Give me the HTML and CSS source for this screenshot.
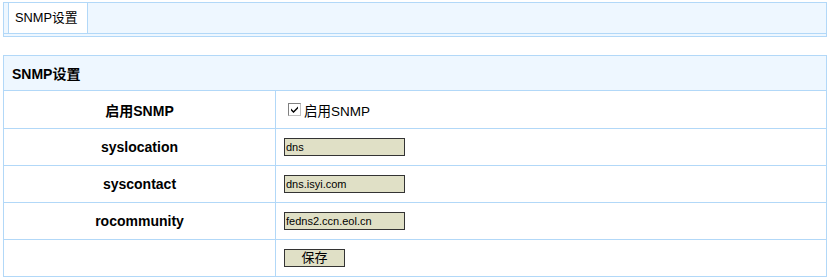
FILE: index.html
```html
<!DOCTYPE html>
<html>
<head>
<meta charset="utf-8">
<link rel="stylesheet" href="styles.css">
</head>
<body>
<div class="topbar">
  <div class="tabs">
    <div class="tab-gap"></div>
    <div class="tab">SNMP设置</div>
    <div class="tab-rest"></div>
  </div>
</div>
<table class="form">
  <tr class="head"><th colspan="2">SNMP设置</th></tr>
  <tr class="r1">
    <td class="label">启用SNMP</td>
    <td class="field"><label class="chk"><span class="box"><svg width="9" height="9" viewBox="0 0 9 9"><path d="M1 3.5 L3.5 6 L8 1.5 L8 3.5 L3.5 8 L1 5.5 Z" fill="#000"/></svg></span>启用SNMP</label></td>
  </tr>
  <tr>
    <td class="label">syslocation</td>
    <td class="field"><input class="txt" type="text" value="dns"></td>
  </tr>
  <tr>
    <td class="label">syscontact</td>
    <td class="field"><input class="txt" type="text" value="dns.isyi.com"></td>
  </tr>
  <tr>
    <td class="label">rocommunity</td>
    <td class="field"><input class="txt" type="text" value="fedns2.ccn.eol.cn"></td>
  </tr>
  <tr>
    <td class="label"></td>
    <td class="field"><button class="btn" type="button">保存</button></td>
  </tr>
</table>
</body>
</html>
```
FILE: styles.css
```css
html, body {
  margin: 0;
  padding: 0;
  background: #fff;
  font-family: "Liberation Sans", Arial, "Noto Sans CJK SC", sans-serif;
  font-size: 13px;
  color: #000;
}
.topbar {
  margin: 2px 2px 0 3px;
  border: 1px solid #b2d8f8;
  background: #eef7ff;
  height: 33px;
}
.tabs {
  display: flex;
  height: 30px;
  border-bottom: 1px solid #b2d8f8;
}
.tab-gap {
  width: 4px;
  background: #eef7ff;
}
.tab {
  width: 80px;
  background: #fff;
  border-left: 1px solid #b2d8f8;
  border-right: 1px solid #b2d8f8;
  line-height: 29px;
  font-size: 12.8px;
  padding-left: 6px;
  box-sizing: border-box;
}
.tab-rest {
  flex: 1;
  background: #eef7ff;
}
.form {
  margin: 18px 2px 0 3px;
  width: 824px;
  border-collapse: collapse;
}
.form th, .form td {
  border: 1px solid #b2d8f8;
  padding: 0;
}
.form tr { height: 37px; }
.form tr.r1 { height: 38px; }
.form tr.head { height: 35px; }
.form th {
  background: #eef7ff;
  text-align: left;
  padding-left: 8px;
  font-weight: bold;
  font-size: 14px;
}
.label {
  width: 271px;
  text-align: center;
  font-weight: bold;
  font-size: 14px;
}
.field {
  padding-left: 8px !important;
}
.chk {
  display: inline-flex;
  align-items: center;
  gap: 3px;
  margin-left: 4px;
  font-size: 13.5px;
}
.box {
  width: 11px;
  height: 11px;
  border: 1px solid #808080;
  border-right-color: #c0c0c0;
  border-bottom-color: #c0c0c0;
  background: #fff;
  display: inline-flex;
  align-items: center;
  justify-content: center;
}
.txt {
  width: 121px;
  height: 18px;
  box-sizing: border-box;
  border: 1px solid #333;
  background: #e0e0c6;
  font-family: "Liberation Sans", Arial, sans-serif;
  font-size: 11px;
  padding: 0 1px;
  margin: 0;
  vertical-align: middle;
  color: #000;
}
.btn {
  width: 61px;
  height: 18px;
  box-sizing: border-box;
  border: 1px solid #333;
  background: #e0e0c6;
  font-family: "Liberation Sans", "Noto Sans CJK SC", sans-serif;
  font-size: 13px;
  line-height: 14px;
  padding: 0;
  margin: 0;
  color: #000;
  vertical-align: middle;
}
```
